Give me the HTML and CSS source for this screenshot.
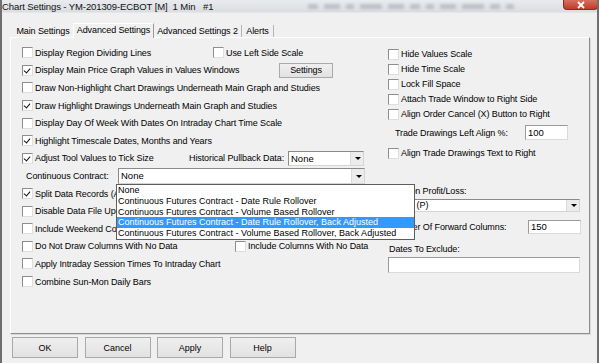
FILE: index.html
```html
<!DOCTYPE html>
<html lang="en">
<head>
  <meta charset="UTF-8">
  <title>Chart Settings</title>
  <link rel="stylesheet" href="styles.css">
</head>
<body>
  <div class="window">
    <div class="titlebar">
      <span class="title">Chart Settings - YM-201309-ECBOT [M]&nbsp; 1 Min &nbsp; #1</span>
      <!-- blurred toolbar seen through the glass frame -->
      <div class="ghost">
        <span class="g1"></span><span class="g2"></span><span class="g3"></span><span class="g4"></span>
        <span class="g2"></span><span class="g1"></span><span class="g3"></span><span class="g2"></span>
        <span class="g4"></span><span class="g1"></span><span class="g3"></span>
      </div>
      <div class="close">
        <svg width="10" height="8" viewBox="0 0 10 8"><path d="M2 1 L8 7 M8 1 L2 7" stroke="#fff" stroke-width="1.8"/></svg>
      </div>
    </div>

    <div class="content">
      <ul class="tabs">
        <li class="tab t-main">Main Settings</li>
        <li class="tab t-adv on">Advanced Settings</li>
        <li class="tab t-adv2">Advanced Settings 2</li>
        <li class="tab t-alerts">Alerts</li>
      </ul>

      <div class="panel">
        <div class="col-left">
          <div class="row row-scale">
            <label class="chk"><span class="box"></span>Display Region Dividing Lines</label>
            <label class="chk"><span class="box"></span>Use Left Side Scale</label>
          </div>
          <div class="row row-settings">
            <label class="chk"><span class="box on"></span>Display Main Price Graph Values in Values Windows</label>
            <button class="btn small">Settings</button>
          </div>
          <div class="row">
            <label class="chk"><span class="box"></span>Draw Non-Highlight Chart Drawings Underneath Main Graph and Studies</label>
          </div>
          <div class="row">
            <label class="chk"><span class="box on"></span>Draw Highlight Drawings Underneath Main Graph and Studies</label>
          </div>
          <div class="row">
            <label class="chk"><span class="box"></span>Display Day Of Week With Dates On Intraday Chart Time Scale</label>
          </div>
          <div class="row">
            <label class="chk"><span class="box on"></span>Highlight Timescale Dates, Months and Years</label>
          </div>
          <div class="row row-pull">
            <label class="chk"><span class="box on"></span>Adjust Tool Values to Tick Size</label>
            <span class="lbl">Historical Pullback Data:</span>
            <div class="select sel-pull"><span class="val">None</span><span class="arrow"></span></div>
          </div>
          <div class="row row-contract">
            <span class="lbl">Continuous Contract:</span>
            <div class="select sel-contract">
              <span class="val">None</span><span class="arrow"></span>
              <ul class="droplist">
                <li>None</li>
                <li>Continuous Futures Contract - Date Rule Rollover</li>
                <li>Continuous Futures Contract - Volume Based Rollover</li>
                <li class="hi">Continuous Futures Contract - Date Rule Rollover, Back Adjusted</li>
                <li>Continuous Futures Contract - Volume Based Rollover, Back Adjusted</li>
              </ul>
            </div>
          </div>
          <div class="row">
            <label class="chk"><span class="box on"></span>Split Data Records (Adjust For Splits)</label>
          </div>
          <div class="row">
            <label class="chk"><span class="box"></span>Disable Data File Updates</label>
          </div>
          <div class="row">
            <label class="chk"><span class="box"></span>Include Weekend Columns</label>
          </div>
          <div class="row row-cols">
            <label class="chk"><span class="box"></span>Do Not Draw Columns With No Data</label>
            <label class="chk"><span class="box"></span>Include Columns With No Data</label>
          </div>
          <div class="row">
            <label class="chk"><span class="box"></span>Apply Intraday Session Times To Intraday Chart</label>
          </div>
          <div class="row">
            <label class="chk"><span class="box"></span>Combine Sun-Mon Daily Bars</label>
          </div>
        </div>

        <div class="col-right">
          <label class="chk rrow"><span class="box"></span>Hide Values Scale</label>
          <label class="chk rrow"><span class="box"></span>Hide Time Scale</label>
          <label class="chk rrow"><span class="box"></span>Lock Fill Space</label>
          <label class="chk rrow"><span class="box"></span>Attach Trade Window to Right Side</label>
          <label class="chk rrow"><span class="box"></span>Align Order Cancel (X) Button to Right</label>
          <div class="trade-row">
            <span class="lbl">Trade Drawings Left Align %:</span>
            <span class="input in-trade">100</span>
          </div>
          <label class="chk rrow r-align"><span class="box"></span>Align Trade Drawings Text to Right</label>

          <span class="lbl r-pl">Position Profit/Loss:</span>
          <div class="select sel-pl"><span class="val">Points (P)</span><span class="arrow"></span></div>
          <div class="fwd-row">
            <span class="lbl">Number Of Forward Columns:</span>
            <span class="input in-fwd">150</span>
          </div>
          <span class="lbl r-dates">Dates To Exclude:</span>
          <span class="input in-dates"></span>
        </div>
      </div>

      <div class="buttons">
        <button class="btn">OK</button>
        <button class="btn">Cancel</button>
        <button class="btn">Apply</button>
        <button class="btn">Help</button>
      </div>
    </div>
  </div>
</body>
</html>
```

FILE: styles.css
```css
* {margin:0; padding:0; box-sizing:border-box;}
ul,li{
  list-style: none;
}

body{
  font-family: "Liberation Sans", Arial, sans-serif;
  font-size: 9px;
  color: #000;
  background: #f0f0f0;
}

.window{
  width: 599px;
  height: 363px;
  background: #f0f0f0;
  border-left: 2px solid #6f6f6f;
  border-right: 2px solid #6f6f6f;
  position: relative;
  overflow: hidden;
}

/* title bar */
.titlebar{
  height: 13px;
  display: flex;
  align-items: center;
  background: linear-gradient(#e9ebee, #dadde1);
  border-bottom: 1px solid #e6e6e6;
  margin: 0 -2px;
}

.title{
  font-size: 9.5px;
  padding-left: 2px;
  white-space: nowrap;
  letter-spacing: -0.1px;
  color: #111;
}

.ghost{
  display: flex;
  gap: 6px;
  margin-left: 95px;
  filter: blur(1.5px);
  opacity: .35;
}
.ghost span{
  height: 5px;
  background: #7d8088;
  border-radius: 1px;
}
.ghost .g1{width: 10px;}
.ghost .g2{width: 16px;}
.ghost .g3{width: 8px;}
.ghost .g4{width: 22px;}

.close{
  margin-left: auto;
  width: 35px;
  height: 10px;
  align-self: flex-start;
  background: linear-gradient(#d6705f, #c23a2a);
  border: 1px solid #8b2a20;
  border-top: none;
  border-radius: 0 0 4px 4px;
  display: flex;
  align-items: center;
  justify-content: center;
  margin-right: 1px;
}

/* tabs */
.content{
  padding: 9px 0 0 8px;
}

.tabs{
  display: flex;
  align-items: flex-end;
  padding-left: 3px;
  height: 15px;
}

.tab{
  height: 12px;
  line-height: 12px;
  text-align: center;
  border-right: 1px solid #b4b4b4;
  white-space: nowrap;
  letter-spacing: -0.1px;
}
.t-main{width: 60px; border-right: none;}
.t-adv{width: 81px;}
.t-adv2{width: 88px;}
.t-alerts{width: 32px;}

.tab.on{
  height: 15px;
  line-height: 13px;
  background: #f0f0f0;
  border-left: 1px solid #fff;
  border-top: 1px solid #fff;
  border-right: 1px solid #9a9a9a;
  margin-bottom: -1px;
  position: relative;
  z-index: 1;
}

/* panel */
.panel{
  width: 580px;
  height: 297px;
  border: 1px solid #fff;
  border-right-color: #8e8e8e;
  border-bottom-color: #8e8e8e;
  box-shadow: 1px 1px 0 #d8d8d8;
  display: flex;
  padding-left: 11px;
}

.col-left{
  width: 366px;
  padding-top: 6px;
}

.row{
  height: 17.6px;
  display: flex;
  align-items: center;
  white-space: nowrap;
}

.chk{
  display: flex;
  align-items: center;
  white-space: nowrap;
  letter-spacing: -0.1px;
}

.lbl{
  white-space: nowrap;
  letter-spacing: -0.1px;
}

.box{
  width: 11px;
  height: 11px;
  margin-right: 2px;
  background: #fff;
  border: 1px solid #8d8d8d;
  border-right-color: #dedede;
  border-bottom-color: #dedede;
  flex: none;
  position: relative;
}
.box.on::after{
  content: "";
  position: absolute;
  left: 2px;
  top: 1px;
  width: 3px;
  height: 5px;
  border-right: 1.5px solid #111;
  border-bottom: 1.5px solid #111;
  transform: rotate(40deg);
}

.row-scale{
  display: grid;
  grid-template-columns: 191px auto;
}
.row-settings{
  display: grid;
  grid-template-columns: 257px 54px;
}
.row-pull{
  display: grid;
  grid-template-columns: 167px 99px 76px;
}
.row-contract{
  display: grid;
  grid-template-columns: 96px 247px;
}
.row-contract .lbl{
  padding-left: 4px;
}
.row-cols{
  display: grid;
  grid-template-columns: 213px auto;
}

/* buttons */
.btn{
  font-family: "Liberation Sans", Arial, sans-serif;
  font-size: 9px;
  background: linear-gradient(#efefef, #e2e2e2);
  border: 1px solid #a9a9a9;
  color: #000;
  width: 66px;
  height: 21px;
}
.btn.small{
  width: 54px;
  height: 15px;
  letter-spacing: -0.1px;
}

.buttons{
  display: flex;
  gap: 6.5px;
  margin-top: 3px;
  padding-left: 2px;
}

/* combo boxes and edits */
.select{
  position: relative;
  background: #fff;
  border: 1px solid #8a8a8a;
  border-right-color: #d4d4d4;
  border-bottom-color: #d4d4d4;
  display: flex;
  align-items: center;
}
.select .val{
  padding-left: 2px;
  flex: 1;
  font-size: 9.5px;
}
.select .arrow{
  width: 13px;
  align-self: stretch;
  background: #ececec;
  border-left: 1px solid #dcdcdc;
  position: relative;
}
.select .arrow::after{
  content: "";
  position: absolute;
  left: 4px;
  top: 50%;
  margin-top: -1px;
  border-left: 3px solid transparent;
  border-right: 3px solid transparent;
  border-top: 3px solid #000;
}

.sel-pull{height: 15px;}
.sel-contract{height: 16px;}

.droplist{
  position: absolute;
  left: -3px;
  top: 15px;
  width: 299px;
  background: #fff;
  border: 1px solid #5d5d5d;
  z-index: 5;
}
.droplist li{
  height: 10.8px;
  line-height: 10.8px;
  padding-left: 1px;
  white-space: nowrap;
  font-size: 9px;
}
.droplist li.hi{
  background: #3399ff;
  color: #fff;
}

.input{
  display: block;
  background: #fff;
  border: 1px solid #9a9a9a;
  border-right-color: #dadada;
  border-bottom-color: #dadada;
  padding-left: 2px;
  font-size: 9.5px;
}

/* right column */
.col-right{
  flex: 1;
  padding-top: 8.5px;
  display: flex;
  flex-direction: column;
  align-items: flex-start;
}

.rrow{
  height: 15px;
}

.trade-row{
  height: 22px;
  display: grid;
  grid-template-columns: 137px 36px;
  align-items: center;
  padding-left: 7px;
}
.in-trade{
  height: 15px;
  line-height: 13px;
  margin-left: -7px;
}

.r-align{
  margin-top: 2px;
}

.r-pl{
  margin-top: 24px;
  height: 12px;
  line-height: 12px;
  padding-left: 1px;
}

.sel-pl{
  width: 192px;
  height: 13px;
  margin-top: 2px;
}
.sel-pl .val{
  font-size: 9px;
  padding-left: 0;
}

.fwd-row{
  margin-top: 7px;
  height: 16px;
  display: grid;
  grid-template-columns: 140px 52px;
  align-items: center;
  padding-left: 1px;
}
.in-fwd{
  height: 14px;
  line-height: 12px;
  margin-left: -1px;
}

.r-dates{
  margin-top: 8px;
  height: 12px;
  line-height: 12px;
  padding-left: 1px;
}

.in-dates{
  width: 192px;
  height: 16px;
  margin-top: 2px;
}
```
